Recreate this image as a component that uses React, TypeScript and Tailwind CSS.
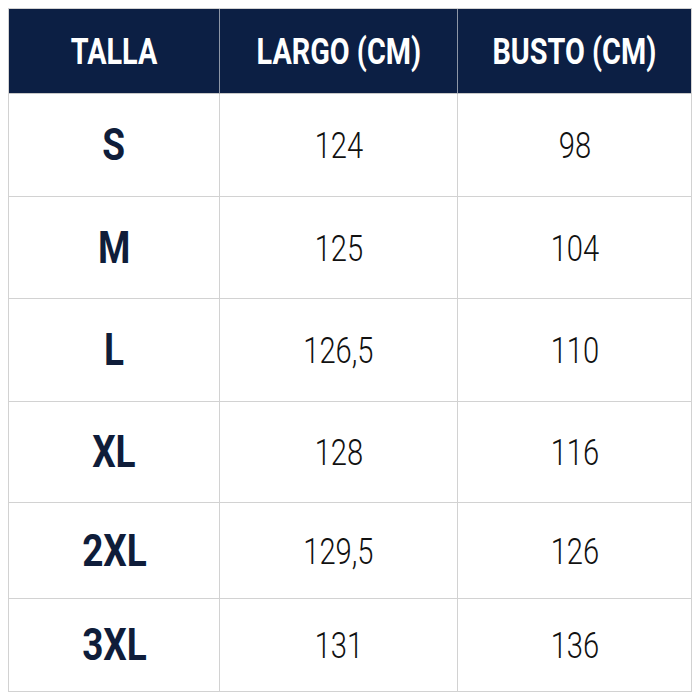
import React from "react";

const rows: { size: string; largo: string; busto: string; h: string }[] = [
  { size: "S", largo: "124", busto: "98", h: "h-[103px]" },
  { size: "M", largo: "125", busto: "104", h: "h-[102px]" },
  { size: "L", largo: "126,5", busto: "110", h: "h-[103px]" },
  { size: "XL", largo: "128", busto: "116", h: "h-[101px]" },
  { size: "2XL", largo: "129,5", busto: "126", h: "h-[96px]" },
  { size: "3XL", largo: "131", busto: "136", h: "h-[93px]" },
];

const headers = ["TALLA", "LARGO (CM)", "BUSTO (CM)"];

export default function App() {
  return (
    <div className="w-[700px] h-[700px] bg-white p-[8px] font-['Roboto',sans-serif]">
      <div className="grid grid-cols-[211px_238px_234px] border-l border-t border-[#d2d2d2]">
        {headers.map((h, i) => (
          <div
            key={h}
            className={`h-[85px] bg-[#0c1f44] flex items-center justify-center border-b border-[#c8c8c8] ${i < 2 ? "border-r border-r-[#8e96a6]" : "border-r border-r-[#d2d2d2]"}`}
          >
            <span className="inline-block text-white text-[36px] font-bold leading-none scale-x-[0.8] whitespace-nowrap translate-y-[1px]">
              {h}
            </span>
          </div>
        ))}
        {rows.map((r) => (
          <React.Fragment key={r.size}>
            <div className={`${r.h} flex items-center justify-center border-r border-b border-[#d2d2d2]`}>
              <span className="inline-block text-[#0f1d3a] text-[44px] font-bold leading-none scale-x-[0.84]">
                {r.size}
              </span>
            </div>
            <div className={`${r.h} flex items-center justify-center border-r border-b border-[#d2d2d2]`}>
              <span className="inline-block text-[#111111] text-[36px] font-light leading-none scale-x-[0.81] translate-y-[1px]">
                {r.largo}
              </span>
            </div>
            <div className={`${r.h} flex items-center justify-center border-r border-b border-[#d2d2d2]`}>
              <span className="inline-block text-[#111111] text-[36px] font-light leading-none scale-x-[0.81] translate-y-[1px]">
                {r.busto}
              </span>
            </div>
          </React.Fragment>
        ))}
      </div>
    </div>
  );
}
